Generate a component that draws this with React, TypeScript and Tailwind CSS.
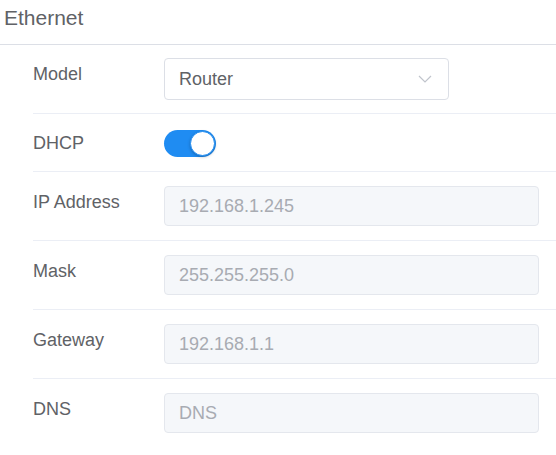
import React from "react";

const fields = [
  { label: "IP Address", value: "192.168.1.245" },
  { label: "Mask", value: "255.255.255.0" },
  { label: "Gateway", value: "192.168.1.1" },
  { label: "DNS", value: "", placeholder: "DNS" },
];

export default function App() {
  return (
    <div className="min-h-screen bg-white text-[#606266] font-['Liberation_Sans',Arial,sans-serif]">
      {/* header */}
      <div className="h-[45px] border-b border-[#dcdfe6] pl-[4px] pt-[4px] text-[21px] leading-[28px]">
        Ethernet
      </div>

      <div className="ml-[33px]">
        {/* Model */}
        <div className="flex items-start border-b border-[#ebeef5] pt-[13px] pb-[13px]">
          <div className="w-[131px] text-[18px] leading-[32px]">Model</div>
          <div className="flex h-[42px] w-[285px] items-center justify-between rounded-[4px] border border-[#dcdfe6] bg-white pl-[14px] pr-[16px] text-[18px]">
            <span>Router</span>
            <svg width="14" height="8" viewBox="0 0 14 8" fill="none">
              <path d="M1 1l6 6 6-6" stroke="#c0c4cc" strokeWidth="1.2" />
            </svg>
          </div>
        </div>

        {/* DHCP */}
        <div className="flex items-center border-b border-[#ebeef5] pt-[13px] pb-[12px]">
          <div className="w-[131px] text-[18px] leading-[32px]">DHCP</div>
          <div className="flex h-[27px] w-[52px] items-center justify-end rounded-full bg-[#1f8cf2] px-[1px]">
            <div className="h-[25px] w-[25px] rounded-full border border-[#1f8cf2] bg-white shadow-[0_1px_3px_rgba(0,0,0,0.25)]" />
          </div>
        </div>

        {fields.map((f, i) => (
          <div
            key={f.label}
            className={`flex items-start py-[14px] ${i < fields.length - 1 ? "border-b border-[#ebeef5]" : ""}`}
          >
            <div className="w-[131px] text-[18px] leading-[32px]">{f.label}</div>
            <div className="flex h-10 w-[375px] items-center rounded-[4px] border border-[#e4e7ed] bg-[#f5f7fa] pl-[14px] text-[18px] text-[#a8abb2]">
              {f.value || f.placeholder}
            </div>
          </div>
        ))}
      </div>
    </div>
  );
}
